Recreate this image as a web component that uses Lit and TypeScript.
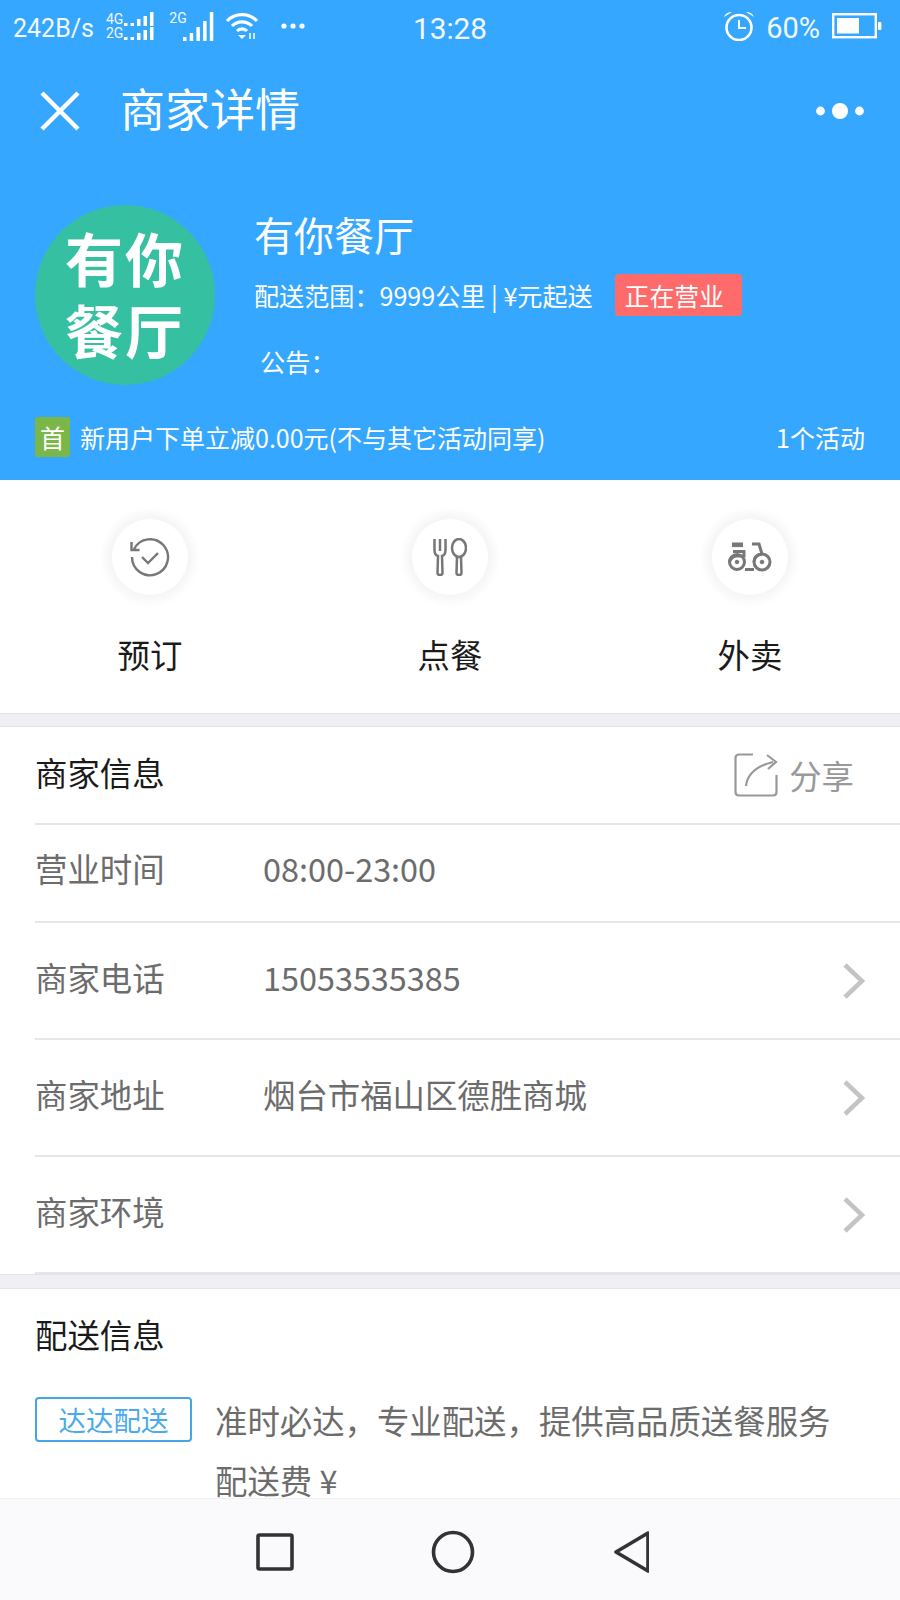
import { LitElement, html, css, svg } from "lit";
import { customElement } from "lit/decorators.js";

const chevron = html`<svg class="chev" viewBox="0 0 24 36"><path d="M3 2 L20 18 L3 34" fill="none" stroke="#c4c4c6" stroke-width="4.5"/></svg>`;

const bars = (hs: number[], w: number, gap: number, h: number) => svg`${hs.map(
  (v, i) => svg`<rect x=${i * (w + gap)} y=${h - v} width=${w} height=${v} fill="#fff"/>`
)}`;

@customElement("app-root")
export class AppRoot extends LitElement {
  static styles = css`
    :host { display: block; width: 900px; height: 1600px; overflow: hidden; background: #fff;
      font-family: "Noto Sans CJK SC", "Noto Sans", sans-serif; }
    .page { height: 1498px; overflow: hidden; }
    .top { background: #36a7ff; color: #fff; height: 480px; display: flex; flex-direction: column; }
    .status { height: 52px; box-sizing: border-box; display: grid; grid-template-columns: 1fr auto 1fr; align-items: center;
      padding: 0 18px 0 13px; font-family: Roboto, sans-serif; color: #f2f9ff; }
    .sl { display: flex; align-items: center; font-size: 25px; }
    .sr { display: flex; align-items: center; justify-content: flex-end; font-size: 29px; }
    .sr span { padding-top: 4px; }
    .time { font-size: 29.8px; padding-left: 5px; padding-top: 4px; }
    .nettxt { font-size: 25px; margin-right: 12px; padding-top: 4px; }
    .sig { display: grid; grid-template-columns: auto auto; font-size: 14px; line-height: 14px; column-gap: 1px; margin-right: 14px; }
    .sig2 { position: relative; width: 44px; height: 30px; margin-right: 12px; }
    .sig2 span { position: absolute; left: 0; top: 0; font-size: 14px; line-height: 14px; }
    .sig2 svg { position: absolute; left: 14px; top: 0; }
    .nav { height: 118px; display: flex; align-items: center; padding: 0 36px 0 40px; }
    .nav .title { font-size: 45px; margin: 0 0 8px 40px; flex: 1; line-height: 1; }
    .profile { display: flex; padding: 35px 0 0 35px; }
    .logo { width: 180px; height: 180px; border-radius: 50%; background: #35c0a2; color: #fff;
      font-weight: 700; font-size: 58px; line-height: 72px; letter-spacing: 2px; text-align: center;
      display: flex; align-items: center; justify-content: center; flex: none; padding-bottom: 4px; box-sizing: border-box; }
    .info { margin-left: 39px; display: flex; flex-direction: column; }
    .name { font-size: 40px; line-height: 58px; }
    .meta { display: flex; align-items: center; font-size: 25.1px; line-height: 42px; margin-top: 11px; }
    .badge { background: #ff6b6b; border-radius: 4px; width: 127px; height: 42px; font-size: 24.8px; line-height: 42px;
      padding-left: 10px; box-sizing: border-box; margin-left: 22px; }
    .notice { font-size: 25.2px; line-height: 36px; margin: 27px 0 0 6px; }
    .promo { display: flex; align-items: center; padding: 0 35px; margin-top: 32px; font-size: 25px; }
    .shou { width: 35px; height: 40px; border-radius: 3px; background: #7ab648; font-size: 25px; line-height: 40px; text-align: center; margin-right: 10px; }
    .promo .t { flex: 1; }
    .actions { height: 233px; display: grid; grid-template-columns: repeat(3, 1fr); }
    .act { display: flex; flex-direction: column; align-items: center; padding-top: 39px; font-size: 32.4px; color: #1a1a1a; }
    .circle { width: 76px; height: 76px; border-radius: 50%; background: #fff;
      box-shadow: 0 0 10px 6px #f5f4f6; display: flex; align-items: center; justify-content: center; }
    .act .lb { margin-top: 36px; line-height: 46px; }
    .gap { background: #f0eff4; border-top: 1px solid #e4e4e6; border-bottom: 1px solid #e4e4e6; box-sizing: border-box; }
    .g1 { height: 14px; }
    .g2 { height: 15px; }
    .sec { padding-left: 35px; }
    .row { display: flex; align-items: center; font-size: 32.4px; color: #6c6c6c; border-bottom: 2px solid #e6e6e8; box-sizing: border-box; }
    .row.head { height: 98px; color: #1a1a1a; padding-right: 46px; padding-bottom: 8px; }
    .h96 { height: 98px; padding-bottom: 3px; }
    .h117 { height: 117px; }
    .k { width: 228px; flex: none; margin-bottom: 8px; }
    .v { flex: 1; margin-bottom: 8px; }
    .chev { width: 24px; height: 36px; margin-right: 34px; }
    .share { display: flex; align-items: center; color: #999; margin-left: auto; padding-top: 6px; }
    .share svg { margin: 2px 11px 0 0; }
    .deliv { padding: 0 35px; }
    .dh { font-size: 32.4px; color: #1a1a1a; line-height: 46px; padding-top: 22px; }
    .dline { display: flex; margin-top: 40px; }
    .dtag { width: 157px; height: 45px; box-sizing: border-box; border: 2.5px solid #45a5e5; border-radius: 4px; color: #4aaaec;
      font-size: 27.5px; line-height: 40px; text-align: center; flex: none; }
    .dtxt { margin-left: 23px; font-size: 32.4px; line-height: 60px; color: #6c6c6c; margin-top: -7px; white-space: nowrap; }
    .bottom { height: 102px; background: #faf9fc; border-top: 1px solid #f0eff3; box-sizing: border-box; padding-top: 4px;
      display: flex; align-items: center; justify-content: center; }
  `;

  render() {
    return html`
      <div class="page">
        <div class="top">
          <div class="status">
            <div class="sl">
              <span class="nettxt">242B/s</span>
              <div class="sig">
                <span>4G</span>
                <svg width="31" height="14" viewBox="0 0 31 14">${bars([3, 3, 7, 10, 14], 3.5, 3, 14)}</svg>
                <span>2G</span>
                <svg width="31" height="14" viewBox="0 0 31 14">${bars([3, 3, 7, 10, 13], 3.5, 3, 14)}</svg>
              </div>
              <div class="sig2">
                <span>2G</span>
                <svg width="32" height="30" viewBox="0 0 32 30">${bars([4, 8, 14, 20, 29], 3.5, 3.2, 30)}</svg>
              </div>
              <svg width="34" height="28" viewBox="0 0 34 28" style="margin-right:22px">
                <path d="M2 9 A21 21 0 0 1 32 9 M7 14 A14 14 0 0 1 27 14 M12 19 A7 7 0 0 1 22 19" fill="none" stroke="#fff" stroke-width="3.2"/>
                <path d="M13 23 H21 L17 27 Z" fill="#fff"/>
                <path d="M25 21 V27 M29 21 V27" stroke="#fff" stroke-width="1.5"/>
              </svg>
              <svg width="24" height="6" viewBox="0 0 24 6"><circle cx="3" cy="3" r="2.6" fill="#fff"/><circle cx="12" cy="3" r="2.6" fill="#fff"/><circle cx="21" cy="3" r="2.6" fill="#fff"/></svg>
            </div>
            <div class="time">13:28</div>
            <div class="sr">
              <svg width="32" height="30" viewBox="0 0 32 30" style="margin-right:11px">
                <circle cx="16" cy="16.5" r="12.5" fill="none" stroke="#fff" stroke-width="2.6"/>
                <path d="M16 9 V17 H23" fill="none" stroke="#fff" stroke-width="2"/>
                <path d="M1 6 Q3 1 9 1 Z M31 6 Q29 1 23 1 Z" fill="#fff"/>
              </svg>
              <span>60%</span>
              <svg width="50" height="26" viewBox="0 0 50 26" style="margin-left:12px">
                <rect x="1.2" y="1.2" width="42.6" height="23" fill="none" stroke="#fff" stroke-width="2.4"/>
                <rect x="5" y="5" width="22" height="15.5" fill="#fff"/>
                <rect x="46" y="9" width="3.4" height="8" rx="1" fill="#fff"/>
              </svg>
            </div>
          </div>
          <div class="nav">
            <svg width="40" height="40" viewBox="0 0 40 40"><path d="M2 2 L38 38 M38 2 L2 38" stroke="#fff" stroke-width="4.4" fill="none"/></svg>
            <div class="title">商家详情</div>
            <svg width="48" height="18" viewBox="0 0 48 18"><circle cx="4.5" cy="9" r="4.4" fill="#fff"/><circle cx="24" cy="9" r="8" fill="#fff"/><circle cx="43.5" cy="9" r="4.4" fill="#fff"/></svg>
          </div>
          <div class="profile">
            <div class="logo"><div>有你<br />餐厅</div></div>
            <div class="info">
              <div class="name">有你餐厅</div>
              <div class="meta"><span>配送范围：9999公里 | ¥元起送</span><span class="badge">正在营业</span></div>
              <div class="notice">公告：</div>
            </div>
          </div>
          <div class="promo">
            <span class="shou">首</span>
            <span class="t">新用户下单立减0.00元(不与其它活动同享)</span>
            <span>1个活动</span>
          </div>
        </div>

        <div class="actions">
          <div class="act">
            <div class="circle">
              <svg width="42" height="42" viewBox="0 0 42 42" fill="none" stroke="#777" stroke-width="2.4">
                <path d="M5 13 A18 18 0 1 1 3 21" />
                <path d="M2.5 6 V14 H10.5" />
                <path d="M13 21 L19 27 L29 17" />
              </svg>
            </div>
            <div class="lb">预订</div>
          </div>
          <div class="act">
            <div class="circle">
              <svg width="34" height="38" viewBox="0 0 34 38" fill="none" stroke="#777" stroke-width="2.5">
                <path d="M1.5 1 V12 Q1.5 17 5 18 L4.5 35 Q4.5 37 7 37 Q9.5 37 9.5 35 L9 18 Q12.5 17 12.5 12 V1 M7 1 V13" />
                <ellipse cx="26" cy="10" rx="7" ry="9" />
                <path d="M24 19 L23.5 35 Q23.5 37 26 37 Q28.5 37 28.5 35 L28 19" />
              </svg>
            </div>
            <div class="lb">点餐</div>
          </div>
          <div class="act">
            <div class="circle">
              <svg width="44" height="30" viewBox="0 0 44 30" fill="none" stroke="#777" stroke-width="3">
                <rect x="4.5" y="1" width="10" height="3.6" fill="#777" stroke-width="1" />
                <path d="M5 9.5 H16 V14 H8 Q3 15 1.5 20" />
                <circle cx="9" cy="20" r="7.5" />
                <circle cx="9" cy="20" r="1.8" fill="#777" stroke-width="1" />
                <circle cx="34" cy="20" r="8" />
                <circle cx="34" cy="20" r="1.8" fill="#777" stroke-width="1" />
                <path d="M17 27.5 H26 M24 2 H31 L34 12 M26 20 Q26 13 34 12" />
              </svg>
            </div>
            <div class="lb">外卖</div>
          </div>
        </div>
        <div class="gap g1"></div>
        <div class="sec">
          <div class="row head">
            <span>商家信息</span>
            <span class="share">
              <svg width="44" height="44" viewBox="0 0 44 44" fill="none" stroke="#999" stroke-width="2.2">
                <path d="M19 1.5 H5 Q1.5 1.5 1.5 5 V39 Q1.5 42.5 5 42.5 H39 Q42.5 42.5 42.5 39 V22" />
                <path d="M12 33 Q14 15 39 9 M33 2 L42 9 L34 16" />
              </svg>
              分享
            </span>
          </div>
          <div class="row h96"><span class="k">营业时间</span><span class="v">08:00-23:00</span></div>
          <div class="row h117"><span class="k">商家电话</span><span class="v">15053535385</span>${chevron}</div>
          <div class="row h117"><span class="k">商家地址</span><span class="v">烟台市福山区德胜商城</span>${chevron}</div>
          <div class="row h117"><span class="k">商家环境</span><span class="v"></span>${chevron}</div>
        </div>
        <div class="gap g2"></div>
        <div class="deliv">
          <div class="dh">配送信息</div>
          <div class="dline">
            <span class="dtag">达达配送</span>
            <div class="dtxt">准时必达，专业配送，提供高品质送餐服务<br />配送费 ¥</div>
          </div>
        </div>
      </div>
      <div class="bottom">
        <svg width="398" height="44" viewBox="0 0 398 44" fill="none" stroke="#333" stroke-width="3.6" stroke-linejoin="round">
          <rect x="7" y="5" width="34" height="34" rx="1.5" />
          <circle cx="202" cy="22" r="19.5" />
          <path d="M397 3 L365 22 L397 41 Z" />
        </svg>
      </div>
    `;
  }
}
